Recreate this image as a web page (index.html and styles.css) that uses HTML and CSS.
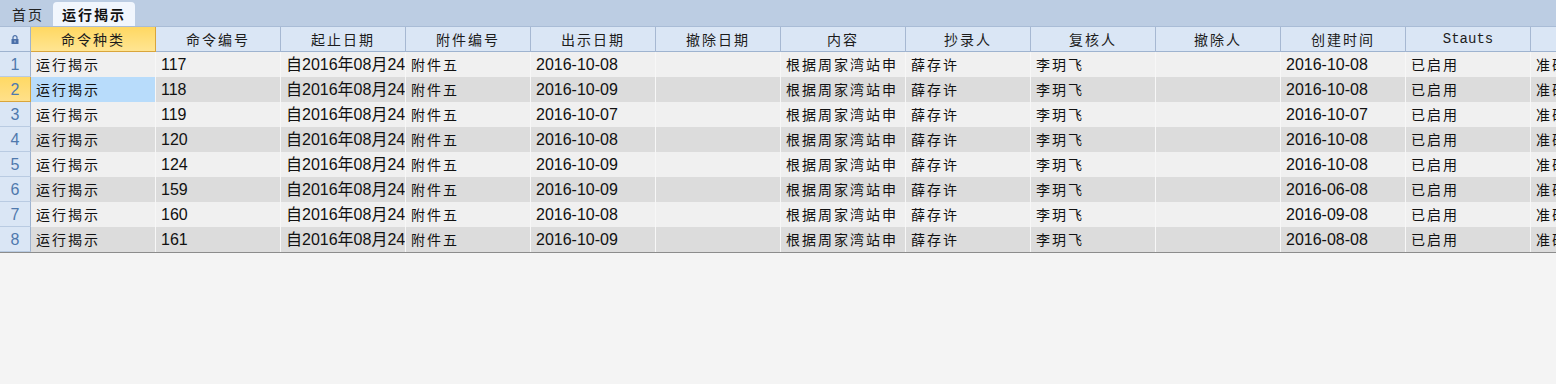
FILE: index.html
```html
<!DOCTYPE html>
<html lang="zh-CN">
<head>
  <meta charset="UTF-8">
  <title>运行揭示</title>
  <link rel="stylesheet" href="styles.css">
</head>
<body>
  <!-- Pestañas -->
  <div class="tabbar">
    <div class="tab">首页</div>
    <div class="tab active">运行揭示</div>
  </div>

  <div class="grid">
    <!-- Encabezado -->
    <div class="row head">
      <div class="num lock">
        <svg width="8" height="9" viewBox="0 0 8 9"><path d="M2 4V2.6a2 2 0 0 1 4 0V4" fill="none" stroke="#4a6fa8" stroke-width="1.2"/><rect x="0.5" y="4" width="7" height="5" fill="#4a6fa8"/><rect x="3.5" y="5.5" width="1" height="2" fill="#c9d8ee"/></svg>
      </div>
      <div class="cell sel">命令种类</div>
      <div class="cell">命令编号</div>
      <div class="cell">起止日期</div>
      <div class="cell">附件编号</div>
      <div class="cell">出示日期</div>
      <div class="cell">撤除日期</div>
      <div class="cell">内容</div>
      <div class="cell">抄录人</div>
      <div class="cell">复核人</div>
      <div class="cell">撤除人</div>
      <div class="cell">创建时间</div>
      <div class="cell en">Stauts</div>
      <div class="cell"></div>
    </div>

    <div class="row">
      <div class="num">1</div>
      <div class="cell cn">运行揭示</div><div class="cell">117</div><div class="cell">自2016年08月24</div><div class="cell cn">附件五</div><div class="cell">2016-10-08</div><div class="cell"></div><div class="cell cn">根据周家湾站申</div><div class="cell cn">薛存许</div><div class="cell cn">李玥飞</div><div class="cell"></div><div class="cell">2016-10-08</div><div class="cell cn">已启用</div><div class="cell cn">准确</div>
    </div>
    <div class="row even">
      <div class="num cur">2</div>
      <div class="cell cn pick">运行揭示</div><div class="cell">118</div><div class="cell">自2016年08月24</div><div class="cell cn">附件五</div><div class="cell">2016-10-09</div><div class="cell"></div><div class="cell cn">根据周家湾站申</div><div class="cell cn">薛存许</div><div class="cell cn">李玥飞</div><div class="cell"></div><div class="cell">2016-10-08</div><div class="cell cn">已启用</div><div class="cell cn">准确</div>
    </div>
    <div class="row">
      <div class="num">3</div>
      <div class="cell cn">运行揭示</div><div class="cell">119</div><div class="cell">自2016年08月24</div><div class="cell cn">附件五</div><div class="cell">2016-10-07</div><div class="cell"></div><div class="cell cn">根据周家湾站申</div><div class="cell cn">薛存许</div><div class="cell cn">李玥飞</div><div class="cell"></div><div class="cell">2016-10-07</div><div class="cell cn">已启用</div><div class="cell cn">准确</div>
    </div>
    <div class="row even">
      <div class="num">4</div>
      <div class="cell cn">运行揭示</div><div class="cell">120</div><div class="cell">自2016年08月24</div><div class="cell cn">附件五</div><div class="cell">2016-10-08</div><div class="cell"></div><div class="cell cn">根据周家湾站申</div><div class="cell cn">薛存许</div><div class="cell cn">李玥飞</div><div class="cell"></div><div class="cell">2016-10-08</div><div class="cell cn">已启用</div><div class="cell cn">准确</div>
    </div>
    <div class="row">
      <div class="num">5</div>
      <div class="cell cn">运行揭示</div><div class="cell">124</div><div class="cell">自2016年08月24</div><div class="cell cn">附件五</div><div class="cell">2016-10-09</div><div class="cell"></div><div class="cell cn">根据周家湾站申</div><div class="cell cn">薛存许</div><div class="cell cn">李玥飞</div><div class="cell"></div><div class="cell">2016-10-08</div><div class="cell cn">已启用</div><div class="cell cn">准确</div>
    </div>
    <div class="row even">
      <div class="num">6</div>
      <div class="cell cn">运行揭示</div><div class="cell">159</div><div class="cell">自2016年08月24</div><div class="cell cn">附件五</div><div class="cell">2016-10-09</div><div class="cell"></div><div class="cell cn">根据周家湾站申</div><div class="cell cn">薛存许</div><div class="cell cn">李玥飞</div><div class="cell"></div><div class="cell">2016-06-08</div><div class="cell cn">已启用</div><div class="cell cn">准确</div>
    </div>
    <div class="row">
      <div class="num">7</div>
      <div class="cell cn">运行揭示</div><div class="cell">160</div><div class="cell">自2016年08月24</div><div class="cell cn">附件五</div><div class="cell">2016-10-08</div><div class="cell"></div><div class="cell cn">根据周家湾站申</div><div class="cell cn">薛存许</div><div class="cell cn">李玥飞</div><div class="cell"></div><div class="cell">2016-09-08</div><div class="cell cn">已启用</div><div class="cell cn">准确</div>
    </div>
    <div class="row even">
      <div class="num">8</div>
      <div class="cell cn">运行揭示</div><div class="cell">161</div><div class="cell">自2016年08月24</div><div class="cell cn">附件五</div><div class="cell">2016-10-09</div><div class="cell"></div><div class="cell cn">根据周家湾站申</div><div class="cell cn">薛存许</div><div class="cell cn">李玥飞</div><div class="cell"></div><div class="cell">2016-08-08</div><div class="cell cn">已启用</div><div class="cell cn">准确</div>
    </div>
  </div>
</body>
</html>
```

FILE: styles.css
```css
/* General */
body {
  margin: 0;
  background-color: #f4f4f4;
  font-family: "Liberation Sans", "Noto Sans CJK SC", sans-serif;
  font-size: 16px;
  color: #111;
  overflow: hidden;
}

/* Pestañas */
.tabbar {
  height: 26px;
  background-color: #bccde3;
  display: flex;
  align-items: flex-end;
  padding-left: 4px;
}

.tab {
  height: 24px;
  line-height: 24px;
  padding: 0 8px;
  margin-right: 1px;
  font-family: "Noto Sans CJK SC", sans-serif;
  font-size: 14px;
  letter-spacing: 2px;
  color: #222;
}

.tab.active {
  padding: 0 9px 0 9px;
  background-color: #f1f6fd;
  border-radius: 4px 4px 0 0;
  font-weight: bold;
  color: #111;
}

/* Cuadrícula */
.grid {
  width: 1556px;
  overflow: hidden;
  border-bottom: 1px solid #8c8c8c;
}

.row {
  display: flex;
  height: 25px;
  background-color: #f0f0f0;
}

.row.even {
  background-color: #dcdcdc;
}

.row.head {
  height: 26px;
  background-color: #dae6f5;
  border-top: 1px solid #a9bcd6;
  box-sizing: border-box;
}

.num {
  flex: 0 0 31px;
  box-sizing: border-box;
  background-color: #dae6f5;
  border-right: 1px solid #9eb3cf;
  border-bottom: 1px solid #b9cbe2;
  color: #4f79ad;
  text-align: center;
  line-height: 26px;
  font-size: 16px;
}

.num.cur {
  background: linear-gradient(#ffd964, #ffe08a);
  border-right-color: #d9a53b;
  border-bottom-color: #d9a53b;
}

.num.lock {
  display: flex;
  align-items: center;
  justify-content: center;
  border-bottom-color: #9eb3cf;
}

.cell {
  flex: 0 0 125px;
  box-sizing: border-box;
  border-right: 1px solid #f7f7f7;
  padding-left: 5px;
  line-height: 26px;
  white-space: nowrap;
  overflow: hidden;
}

.cell.cn {
  font-family: "Noto Sans CJK SC", sans-serif;
  font-size: 14px;
  letter-spacing: 2px;
  line-height: 24px;
}

.cell.pick {
  background-color: #b8dcfb;
}

/* Encabezados de columna */
.head .cell {
  padding-left: 0;
  text-align: center;
  border-right: 1px solid #a6b8d2;
  border-bottom: 1px solid #9eb3cf;
  font-family: "Noto Sans CJK SC", sans-serif;
  font-size: 14px;
  letter-spacing: 2px;
  line-height: 24px;
  color: #1c1c1c;
}

.head .cell.en {
  font-family: "Liberation Mono", monospace;
  font-size: 14px;
  letter-spacing: 0;
}

.head .cell.sel {
  background: linear-gradient(#ffd862, #ffe592);
  border-right-color: #d9a53b;
  border-bottom-color: #d9a53b;
}
```
